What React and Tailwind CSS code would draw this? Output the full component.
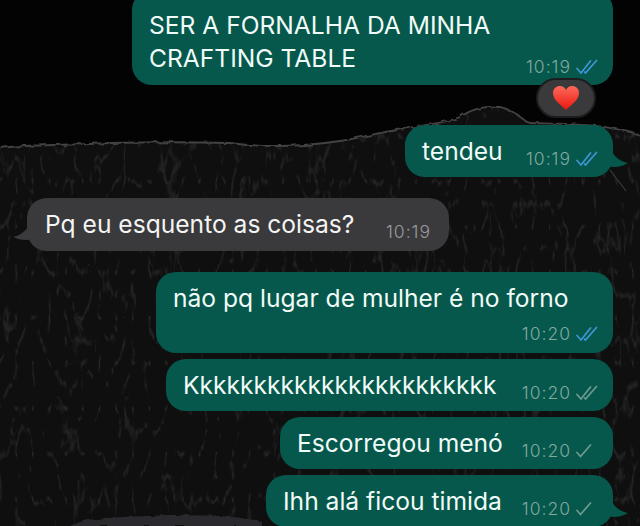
const font = 'font-["Inter",sans-serif]';

// fundo: papel rasgado com textura
function Wallpaper() {
    const edge = 'M0 148 C30 144 60 146 110 143 C150 142 190 142 230 143 C260 147 300 147 340 141 C370 136 385 131 405 129 C425 124 445 124 460 117 C470 110 485 105 500 107 C515 110 522 120 530 123 C570 124 600 123 640 135';
    return (
        <svg className="absolute inset-0" width="640" height="526" viewBox="0 0 640 526">
            <defs>
                <filter id="grain" x="0" y="0" width="100%" height="100%">
                    <feTurbulence type="turbulence" baseFrequency="0.06 0.022" numOctaves="3" seed="11" />
                    <feColorMatrix values="0 0 0 0 1  0 0 0 0 1  0 0 0 0 1  -4 0 0 0 0.72" />
                    <feGaussianBlur stdDeviation="0.7" />
                </filter>
                <filter id="rough" x="-5%" y="-20%" width="110%" height="140%">
                    <feTurbulence type="fractalNoise" baseFrequency="0.12" numOctaves="2" seed="3" />
                    <feDisplacementMap in="SourceGraphic" scale="4" />
                    <feGaussianBlur stdDeviation="0.6" />
                </filter>
                <clipPath id="paper">
                    <path d={edge + ' L640 526 L0 526 Z'} />
                </clipPath>
            </defs>
            <rect width="640" height="526" fill="#030304" />
            <g clipPath="url(#paper)">
                <rect width="640" height="526" fill="#0f0f10" />
                <rect width="640" height="526" filter="url(#grain)" opacity="0.14" />
            </g>
            <path d={edge} fill="none" stroke="#434345" strokeWidth="1.8" filter="url(#rough)" />
            <path d="M610 170 L626 191" fill="none" stroke="#3c3c3e" strokeWidth="1.2" />
            <path d="M70 526 C90 516 120 518 170 515 C200 516 230 514 262 522 L262 526 Z" fill="#2c2c2e" filter="url(#rough)" />
        </svg>
    );
}

function Checks({ kind }) {
    if (kind === 'one') {
        return (
            <svg width="22" height="16" viewBox="0 0 22 16" fill="none" stroke="#6f9b90" strokeWidth="1.7" strokeLinecap="round">
                <path d="M1 9.5 L4.5 13.5 L14.5 2" />
            </svg>
        );
    }
    const cor = kind === 'read' ? '#3f97d6' : '#6f9b90';
    return (
        <svg width="22" height="16" viewBox="0 0 22 16" fill="none" stroke={cor} strokeWidth="1.7" strokeLinecap="round">
            <path d="M1 9.5 L5 14 L14.5 2" />
            <path d="M8.5 13 L9.5 14 L20.5 1.5" />
        </svg>
    );
}

function Hora({ valor, check }) {
    return (
        <span className="flex items-center text-[17.5px] font-light tracking-[1px] text-[#82a8a0] leading-5">
            {valor}
            <span className="ml-[5px] w-[22px]"><Checks kind={check} /></span>
        </span>
    );
}

function Balao({ texto, hora, check, className = '' }) {
    return (
        <div className={`bg-[#05584b] rounded-[20px] flex items-start justify-between h-[52px] pl-[17px] pr-[15px] ${className}`}>
            <span className="text-[24.6px] leading-[52px] text-[#f1fbf8] whitespace-nowrap">{texto}</span>
            <span className="mt-[24px]"><Hora valor={hora} check={check} /></span>
        </div>
    );
}

// rabinho do balão
function Cauda({ lado }) {
    if (lado === 'esquerda') {
        return (
            <svg className="absolute left-[-14px] bottom-[10px]" width="26" height="22" viewBox="0 0 26 22">
                <path d="M18 0 C17 8 10 16 0 18 C8 22 18 22 26 18 Z" fill="#3a3a3c" />
            </svg>
        );
    }
    return (
        <svg className="absolute right-[-15px] bottom-[8px]" width="26" height="24" viewBox="0 0 26 24">
            <path d="M8 0 C9 8 15 16 26 18 C18 23 8 23 0 19 Z" fill="#05584b" />
        </svg>
    );
}

export default function App() {
    return (
        <div className={`relative w-[640px] h-[526px] overflow-hidden bg-[#030304] ${font}`}>
            <Wallpaper />
            <div className="relative flex flex-col items-end pr-[27px] -mt-[10px]">
                {/* primeira mensagem, cortada no topo */}
                <div className="w-[481px] h-[95px] bg-[#05584b] rounded-[20px] pl-[17px] pr-[15px] relative">
                    <p className="pt-[19px] text-[24.6px] leading-[33px] text-[#f1fbf8]">SER A FORNALHA DA MINHA<br />CRAFTING TABLE</p>
                    <span className="absolute right-[15px] bottom-[8px]"><Hora valor="10:19" check="read" /></span>
                    <span className="absolute right-[17px] bottom-[-33px] w-[60px] h-[40px] rounded-[20px] bg-[#3a3a3c] border-2 border-[#1d1d1f] flex items-center justify-center">
                        <svg width="28" height="26" viewBox="0 0 28 26">
                            <defs>
                                <linearGradient id="heart" x1="0" y1="0" x2="0" y2="1">
                                    <stop offset="0" stopColor="#ff6a5c" />
                                    <stop offset="1" stopColor="#e8170f" />
                                </linearGradient>
                            </defs>
                            <path d="M14 25 C9 20 1 15 1 8 C1 3.5 4.5 1 8 1 C10.5 1 12.8 2.5 14 5 C15.2 2.5 17.5 1 20 1 C23.5 1 27 3.5 27 8 C27 15 19 20 14 25 Z" fill="url(#heart)" />
                        </svg>
                    </span>
                </div>

                <div className="relative mt-[40px]">
                    <Balao texto="tendeu" hora="10:19" check="read" className="w-[208px]" />
                    <Cauda lado="direita" />
                </div>

                <div className="relative self-start ml-[27px] mt-[21px] w-[422px] h-[53px] bg-[#3a3a3c] rounded-[20px] pl-[18px] pr-[18px] flex justify-between">
                    <span className="text-[24.6px] leading-[52px] text-[#f4f4f4]">Pq eu esquento as coisas?</span>
                    <span className="mt-[24px] text-[17.5px] font-light tracking-[1px] text-[#9a9a9c] leading-5">10:19</span>
                    <Cauda lado="esquerda" />
                </div>

                <div className="relative mt-[21px] w-[457px] h-[81px] bg-[#05584b] rounded-[20px] pl-[17px] pr-[15px]">
                    <p className="pt-[8px] text-[24.6px] leading-[36px] text-[#f1fbf8]">não pq lugar de mulher é no forno</p>
                    <span className="absolute right-[15px] bottom-[9px]"><Hora valor="10:20" check="read" /></span>
                </div>

                <div className="mt-[6px]"><Balao texto="Kkkkkkkkkkkkkkkkkkkkkkk" hora="10:20" check="two" className="w-[447px]" /></div>
                <div className="mt-[6px]"><Balao texto="Escorregou menó" hora="10:20" check="one" className="w-[333px]" /></div>
                <div className="relative mt-[6px]">
                    <Balao texto="Ihh alá ficou timida" hora="10:20" check="one" className="w-[347px]" />
                    <Cauda lado="direita" />
                </div>
            </div>
        </div>
    );
}
